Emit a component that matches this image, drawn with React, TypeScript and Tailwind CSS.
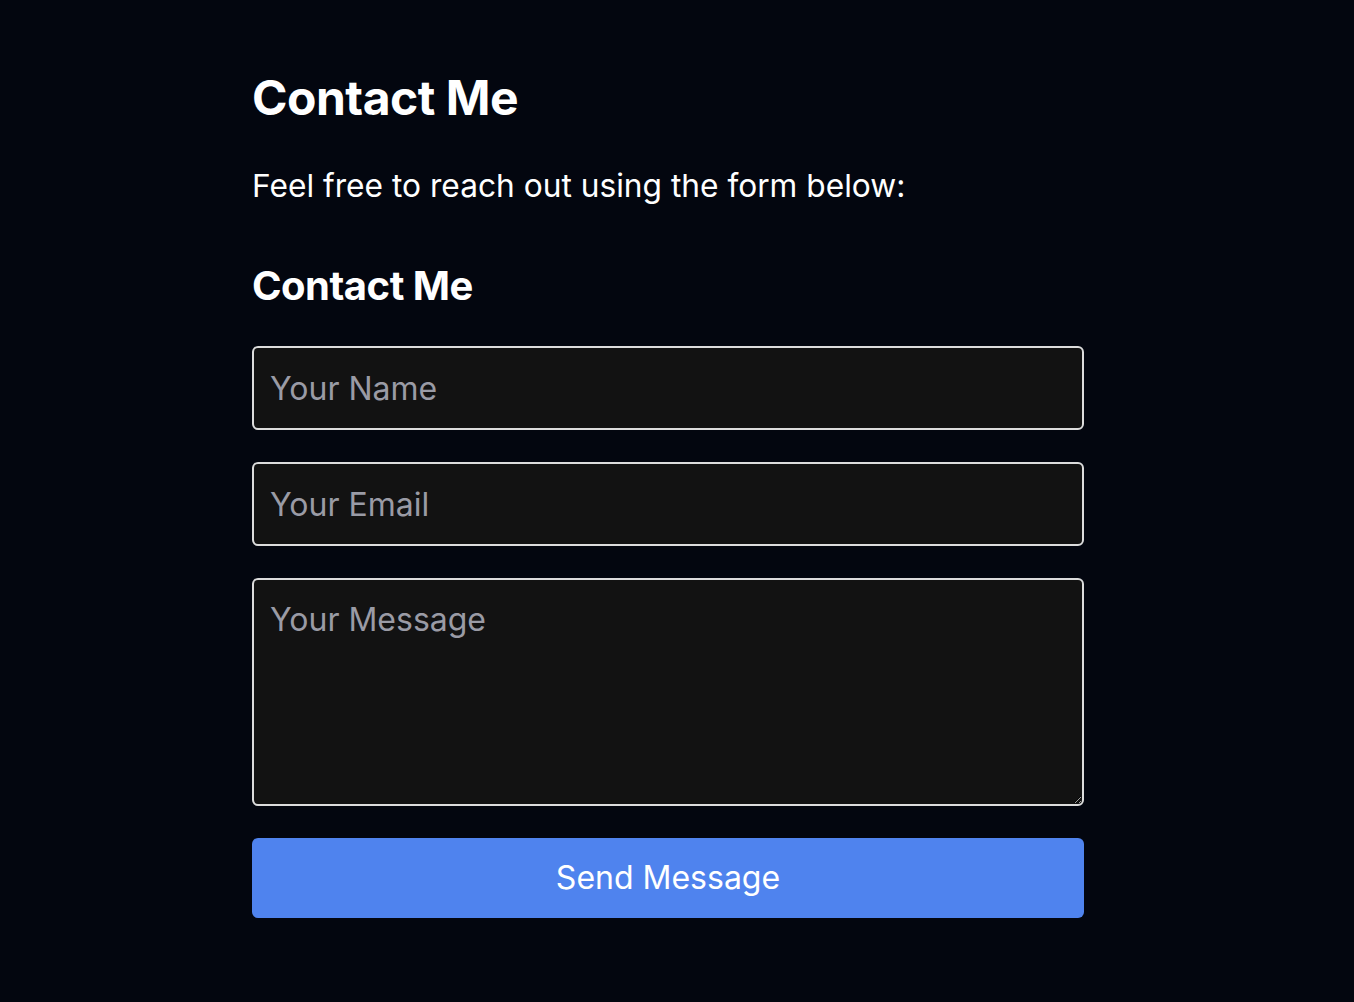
export default function App() {
  return (
    <div className="min-h-screen bg-[#03060f] font-['Inter','Liberation_Sans',sans-serif] text-white">
      <div className="w-[832px] ml-[252px] pt-[66px]">
        <h1 className="text-[48px] font-bold leading-[64px] tracking-[-0.5px]">Contact Me</h1>
        <p className="mt-[34px] text-[31.7px] leading-[44px]">Feel free to reach out using the form below:</p>

        <form className="mt-[52px] flex flex-col" onSubmit={(e) => e.preventDefault()}>
          <h2 className="text-[40px] font-bold leading-[52px] tracking-[-0.5px]">Contact Me</h2>
          <input
            type="text"
            placeholder="Your Name"
            className="mt-[34px] h-[84px] w-full rounded-[6px] border-2 border-[#dcdcdc] bg-[#121212] px-[16px] text-[32px] text-white placeholder:text-[#9a9ba5] focus:outline-none"
          />
          <input
            type="email"
            placeholder="Your Email"
            className="mt-[32px] h-[84px] w-full rounded-[6px] border-2 border-[#dcdcdc] bg-[#121212] px-[16px] text-[32px] text-white placeholder:text-[#9a9ba5] focus:outline-none"
          />
          <textarea
            placeholder="Your Message"
            className="mt-[32px] h-[228px] w-full rounded-[6px] border-2 border-[#dcdcdc] bg-[#121212] px-[16px] py-[20px] text-[32px] leading-[40px] text-white placeholder:text-[#9a9ba5] focus:outline-none"
          />
          <button
            type="submit"
            className="mt-[32px] h-[80px] w-full rounded-[6px] bg-[#4f83ee] text-[32px] text-white"
          >
            Send Message
          </button>
        </form>
      </div>
    </div>
  );
}
